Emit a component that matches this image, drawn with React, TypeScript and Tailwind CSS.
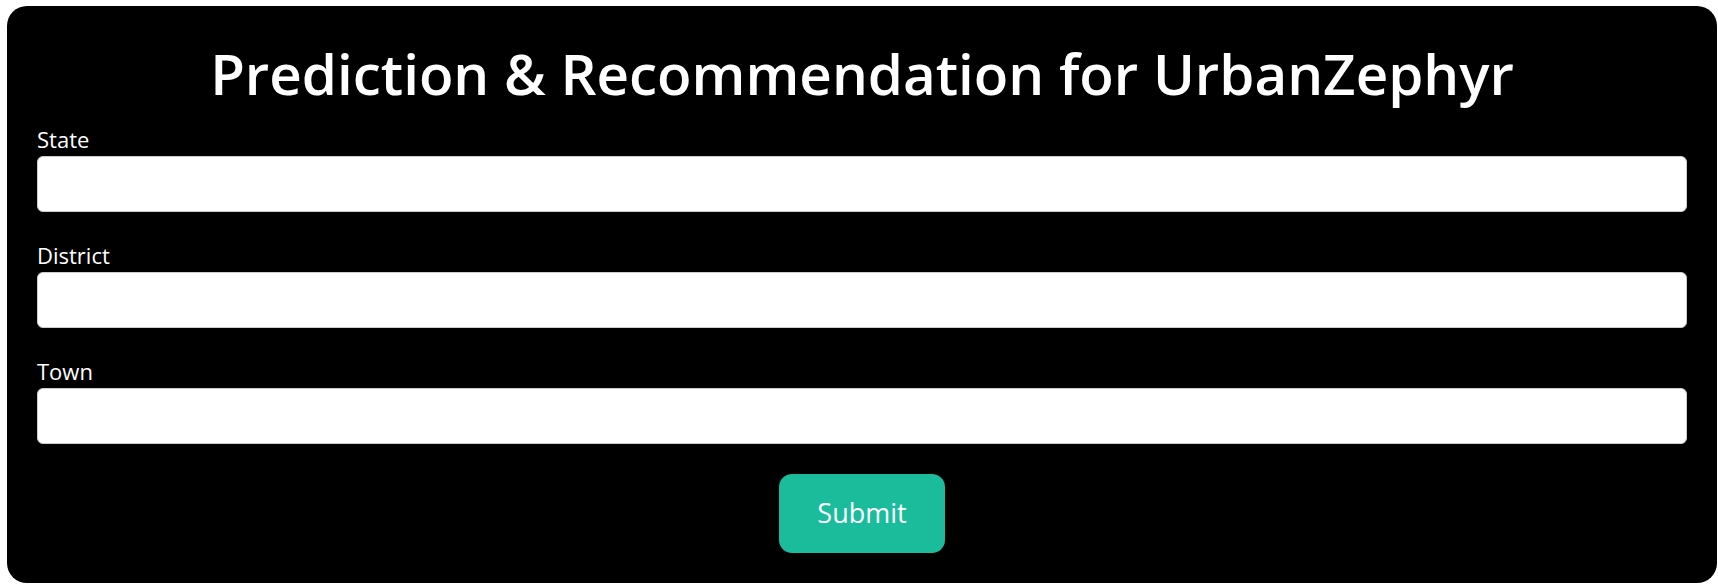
export default function App() {
  const fields = ["State", "District", "Town"];

  return (
    <div className="min-h-screen bg-white pl-[7px] pt-[6px] font-['Open_Sans',sans-serif]">
      <form
        className="flex w-[1710px] flex-col rounded-[20px] bg-black px-[30px] pb-[30px] pt-[34px] text-white"
        onSubmit={(e) => e.preventDefault()}
      >
        <h1 className="text-center text-[56.5px] font-semibold leading-[67px]">
          Prediction &amp; Recommendation for UrbanZephyr
        </h1>

        <div className="mt-[20px] flex flex-col gap-[31px]">
          {fields.map((f) => (
            <div key={f} className="flex flex-col">
              <label className="mb-[5px] text-[22px] leading-[24px]">{f}</label>
              <input
                type="text"
                className="h-[56px] w-full rounded-[6px] border border-[#cccccc] bg-white px-3 text-[20px] text-black outline-none"
              />
            </div>
          ))}
        </div>

        <button
          type="submit"
          className="mx-auto mt-[30px] h-[79px] w-[166px] rounded-[13px] bg-[#1abc9c] text-[27px] text-white"
        >
          Submit
        </button>
      </form>
    </div>
  );
}
